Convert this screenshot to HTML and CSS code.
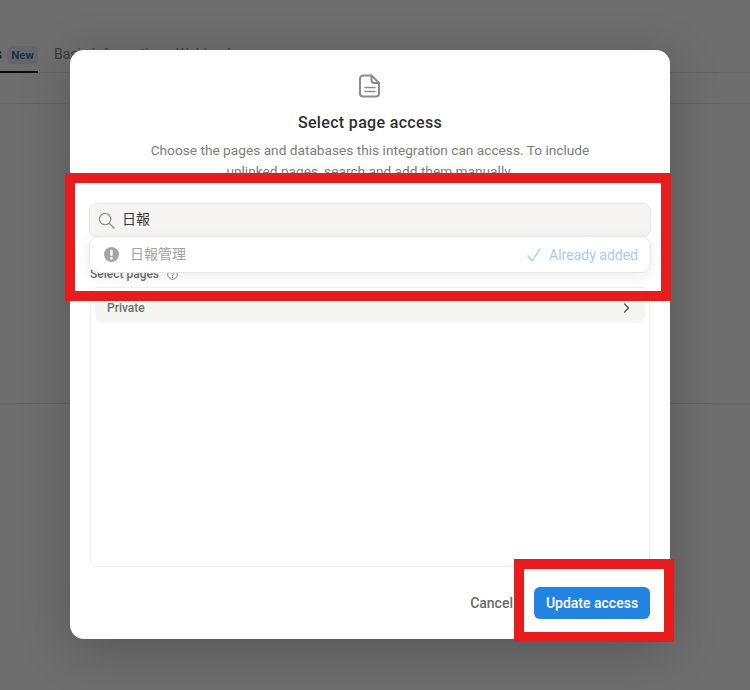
FILE: index.html
```html
<!DOCTYPE html>
<html lang="en">
<head>
<meta charset="utf-8">
<title>Select page access</title>
<link rel="stylesheet" href="styles.css">
</head>
<body>
<div class="page">
  <nav class="tabs">
    <div class="tab tab-active"><span class="tab-clip">Integrations</span><span class="badge">New</span></div>
    <div class="tab">Basic information</div>
    <div class="tab">Webhooks</div>
  </nav>
  <div class="band"></div>
  <div class="section"></div>
</div>

<div class="overlay">
  <section class="dialog">
    <header class="head">
      <svg class="doc-icon" width="22" height="24" viewBox="0 0 22 24" fill="none" stroke="#8c8c8c" stroke-width="2" stroke-linejoin="round" stroke-linecap="round">
        <path d="M4 1.5h8.5l7.5 7.5v10.500a3 3 0 0 1-3 3H4a3 3 0 0 1-3-3v-15a3 3 0 0 1 3-3z"/>
        <path d="M12.500 1.500v4.500a3 3 0 0 0 3 3H20"/>
        <path d="M6 13.500h10M6 17.500h10" stroke-width="1.500"/>
      </svg>
      <h1 class="title">Select page access</h1>
      <p class="desc">Choose the pages and databases this integration can access. To include unlinked pages, search and add them manually.</p>
    </header>

    <div class="search">
      <svg width="17" height="17" viewBox="0 0 18 18" fill="none" stroke="#8a8a86" stroke-width="1.300" stroke-linecap="round">
        <circle cx="7.500" cy="7.500" r="6"/>
        <path d="M12 12l5 5"/>
      </svg>
      <span class="search-text">日報</span>
    </div>

    <div class="result">
      <svg width="15" height="15" viewBox="0 0 14 14">
        <circle cx="7" cy="7" r="7" fill="#a6a5a1"/>
        <rect x="5.900" y="2.600" width="2.200" height="5.800" rx="1.100" fill="#fff"/>
        <circle cx="7" cy="10.500" r="1.200" fill="#fff"/>
      </svg>
      <span class="result-name">日報管理</span>
      <span class="added">
        <svg width="14" height="14" viewBox="0 0 14 14" fill="none" stroke="#a3cdf5" stroke-width="1.300" stroke-linecap="round" stroke-linejoin="round">
          <path d="M1 8l4 5L13 1"/>
        </svg>
        Already added
      </span>
    </div>

    <div class="label-row">
      <span class="label">Select pages</span>
      <svg width="11" height="11" viewBox="0 0 11 11" fill="none" stroke="#8a8a8a" stroke-width="1">
        <circle cx="5.500" cy="5.500" r="4.800"/>
        <path d="M4 4.300a1.500 1.500 0 1 1 2.300 1.200c-.6.400-.8.600-.8 1.200M5.500 8v.6" stroke-linecap="round"/>
      </svg>
    </div>

    <div class="pages-box">
      <div class="page-row">
        <span>Private</span>
        <svg width="7" height="10" viewBox="0 0 7 10" fill="none" stroke="#3a3a3a" stroke-width="1.100" stroke-linecap="round" stroke-linejoin="round">
          <path d="M1.500 .8l4 4.200-4 4.200"/>
        </svg>
      </div>
    </div>

    <footer class="foot">
      <button class="btn-cancel" type="button">Cancel</button>
      <button class="btn-update" type="button">Update access</button>
    </footer>
  </section>

  <div class="mark mark-search"></div>
  <div class="mark mark-button"></div>
</div>
</body>
</html>
```

FILE: styles.css
```css
* {
  box-sizing: border-box;
}

html,
body {
  margin: 0;
  width: 750px;
  height: 690px;
  overflow: hidden;
}

body {
  position: relative;
  background: #fff;
  font-family: Roboto, "Noto Sans CJK JP", sans-serif;
  color: #37352f;
}

.page {
  padding-top: 46px;
}

.tabs {
  display: flex;
  gap: 12px;
  height: 27px;
  border-bottom: 1px solid #e6e6e6;
  font-size: 14px;
  color: #8b8b8b;
}

.tab {
  height: 27px;
  line-height: 16px;
  white-space: nowrap;
}

.tab + .tab {
  margin-left: 4px;
}

.tab + .tab + .tab {
  margin-left: 0;
}

.tab-active {
  display: flex;
  justify-content: flex-end;
  gap: 5px;
  width: 38px;
  overflow: hidden;
  border-bottom: 2px solid #1f1f1f;
  color: #37352f;
}

.tab-clip {
  flex: none;
}

.badge {
  flex: none;
  height: 18px;
  padding: 0 4px;
  border-radius: 5px;
  background: #e6effa;
  color: #2f6fc8;
  font-size: 11.500px;
  font-weight: 600;
  line-height: 18px;
}

.band {
  height: 31px;
  border-bottom: 1px solid #e6e6e6;
}

.section {
  height: 300px;
  border-bottom: 1px solid #e6e6e6;
}

.overlay {
  position: absolute;
  inset: 0;
  padding: 50px 0 0 70px;
  background: rgba(0, 0, 0, 0.57);
}

.dialog {
  position: relative;
  width: 600px;
  height: 589px;
  padding: 24px 20px 20px;
  display: flex;
  flex-direction: column;
  overflow: hidden;
  border-radius: 14px;
  background: #fff;
  box-shadow: 0 10px 50px rgba(0, 0, 0, 0.22);
}

.head {
  flex: none;
  height: 129px;
  display: flex;
  flex-direction: column;
  align-items: center;
  text-align: center;
}

.doc-icon {
  display: block;
  flex: none;
}

.title {
  margin: 14px 0 0;
  font-size: 16px;
  line-height: 22px;
  font-weight: 500;
  letter-spacing: 0.33px;
  color: #2f2f2f;
}

.desc {
  width: 470px;
  margin: 6px 0 0;
  font-size: 13.700px;
  line-height: 21px;
  color: #7d7c78;
}

.search {
  flex: none;
  height: 34px;
  display: flex;
  align-items: center;
  gap: 6px;
  margin: 0 -1px;
  padding-left: 8px;
  border: 1px solid #e6e5e1;
  border-radius: 8px;
  background: #f6f5f3;
  line-height: 16px;
}

.search-text {
  font-size: 14px;
  line-height: 16px;
  margin-top: -2px;
  margin-left: 1px;
  color: #3a3a3a;
}

.result {
  position: absolute;
  top: 186px;
  left: 19px;
  width: 562px;
  height: 37px;
  display: flex;
  align-items: center;
  padding: 0 12px 0 14px;
  border: 1px solid #e8e7e3;
  border-radius: 10px;
  background: #fff;
  box-shadow: 0 3px 14px rgba(0, 0, 0, 0.08);
  font-size: 14px;
  line-height: 16px;
}

.result-name {
  margin-left: 11px;
  margin-top: -2px;
  color: #a3a3a0;
}

.added {
  margin-left: auto;
  display: flex;
  align-items: center;
  gap: 8px;
  color: #a3cdf5;
}

.label-row {
  flex: none;
  height: 14px;
  margin-top: 30px;
  display: flex;
  align-items: center;
  gap: 8px;
}

.label {
  font-size: 12px;
  font-weight: 500;
  color: #6f6f6f;
}

.pages-box {
  flex: none;
  height: 280px;
  margin-top: 6px;
  padding: 5px 4px 0;
  border: 1px solid #efefed;
  border-radius: 8px;
}

.page-row {
  height: 30px;
  display: flex;
  align-items: center;
  justify-content: space-between;
  padding: 0 15px 0 12px;
  border-radius: 0 0 8px 8px;
  background: #f5f5f4;
  font-size: 12px;
  font-weight: 500;
  color: #6f6f6f;
}

.foot {
  flex: none;
  display: flex;
  justify-content: flex-end;
  align-items: center;
  gap: 21px;
  margin-top: 20px;
}

.foot button {
  border: 0;
  padding: 0;
  font-family: inherit;
  font-size: 14px;
  font-weight: 500;
}

.btn-cancel {
  background: none;
  color: #6b6b6b;
}

.btn-update {
  width: 116px;
  height: 32px;
  border-radius: 6px;
  background: #2383e2;
  color: #fff;
  font-weight: 600;
}

.mark {
  position: absolute;
  border: 10px solid #e81c1c;
}

.mark-search {
  left: 65px;
  top: 173px;
  width: 606px;
  height: 128px;
}

.mark-button {
  left: 514px;
  top: 559px;
  width: 160px;
  height: 83px;
}
```
